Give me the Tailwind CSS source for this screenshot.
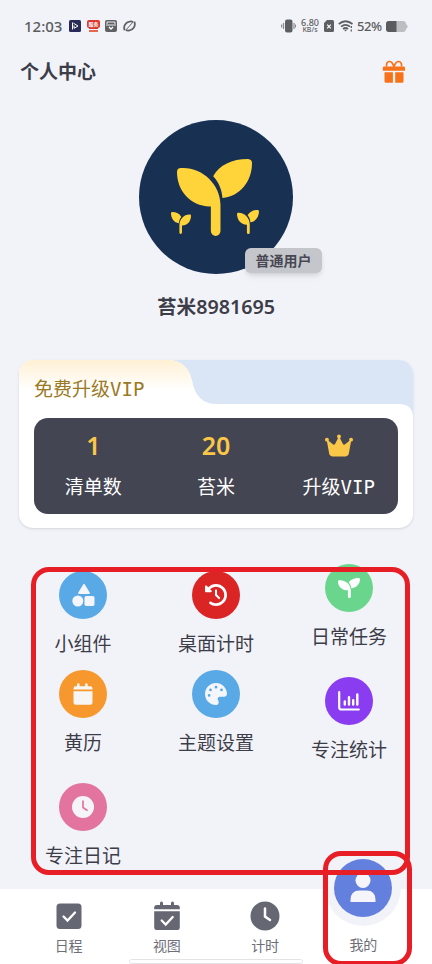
<!DOCTYPE html>
<html lang="zh-CN">
<head>
<meta charset="utf-8">
<title>个人中心</title>
<script src="https://cdn.jsdelivr.net/npm/@tailwindcss/browser@4"></script>
</head>
<body class="bg-[#f2f3f8]">
<svg class="hidden">
  <symbol id="sprout" viewBox="0 0 226 229" preserveAspectRatio="none"><path d="M12 27C75 23 131 75 131 137V214.500a14.500 14.500 0 0 1-29 0V141C42 143 0 95 0 39Q0 27 12 27z"/><path d="M109 51C128 18 165 0 214 0Q226 1 226 13C226 66 190 112 137 116C135 90 126 69 109 51z"/></symbol>
</svg>
<main class="relative flex h-[964px] w-[432px] flex-col overflow-hidden bg-[#f2f3f8] font-['Noto_Sans','Noto_Sans_CJK_SC',sans-serif] text-[#3d3d49]">

  <!-- status bar -->
  <div class="flex h-[50px] items-center pt-[2px] pl-6 text-[#5b5c60]">
    <span class="w-[45px] pt-px text-[15px] font-medium">12:03</span>
    <svg class="h-3 w-3" viewBox="0 0 12 12"><rect width="12" height="12" rx="1.500" fill="#282b57"/><path d="M3.500 2.500v7M4.500 3.200L9 6L5 8.300V5.500" fill="none" stroke="#fff"/></svg>
    <span class="ml-[6px] flex h-3 w-[13px] flex-col items-center"><span class="h-[8px] w-[13px] rounded-[2px] bg-[#dc392f] text-center text-[5px] leading-[8px] font-bold text-white">服务</span><span class="h-px w-[9px] bg-[#dc392f]"></span><span class="mt-px h-[2px] w-[9px] bg-[#e4694f]"></span></span>
    <svg class="ml-[5px] h-3 w-3" viewBox="0 0 12 12"><rect width="12" height="12" rx="2" fill="#606164"/><path d="M2 4V2h8v2M1 5h10" fill="none" stroke="#fff" stroke-width=".9"/><path d="M4 7l2 2 2-2" fill="none" stroke="#fff" stroke-width="1.300"/></svg>
    <svg class="ml-[6px] h-3 w-[13px]" viewBox="0 0 13 12" fill="none" stroke="#606164"><path d="M1.600 10.200C0 6 3 2.200 6.500 1.600c1.500-.3 2.600-.2 3.300.3" stroke-width="1.800"/><path d="M11.400 1.800C13 6 10 9.800 6.500 10.400c-1.500.3-2.600.2-3.300-.3" stroke-width="1.800"/><path d="M1.600 10.200C3 11 9.500 3 9.800 1.900M3.200 10.100C3.500 9 10 1 11.400 1.800" stroke-width=".6"/></svg>
    <svg class="ml-[145px] h-[14px] w-[15px]" viewBox="0 0 15 14"><rect x="4" y=".5" width="7.500" height="13" rx="2" fill="#5e5f62"/><path d="M2.500 4v6M13 4v6M.6 5.500v3M14.600 5.500v3" stroke="#8b8c90" stroke-width="1.200"/></svg>
    <span class="ml-[4px] flex w-5 flex-col items-center text-[9px] leading-[9px] font-medium"><span class="h-[8px]">6.80</span><span class="h-[8px] text-[7px] leading-[8px] font-medium">KB/s</span></span>
    <svg class="ml-[4px] h-3 w-[10px]" viewBox="0 0 10 12"><path d="M3 0h5.500A1.500 1.500 0 0 1 10 1.500v9A1.500 1.500 0 0 1 8.500 12h-7A1.500 1.500 0 0 1 0 10.500V3z" fill="#5e5f62"/><path d="M3.200 4.700l3.600 3.600M6.800 4.700L3.200 8.300" stroke="#fff" stroke-width="1.200"/></svg>
    <svg class="ml-[4px] h-3 w-[16px]" viewBox="0 0 16 12" fill="none" stroke="#5e5f62" stroke-width="1.700"><path d="M.8 4Q7.500-1.500 14.500 4M3 6.700q4.500-3.600 9 0M5 9q2.500-2 5 0"/><path d="M6 9.700h3L7.500 11.500z" fill="#5e5f62" stroke="none"/><path d="M13.300 6v2M13.300 9.500v2" stroke-width="1.300"/></svg>
    <span class="ml-[3px] w-[28px] pt-[2px] text-[13px] tracking-[-0.400px] font-medium">52%</span>
    <svg class="ml-[1px] h-[11px] w-[22px]" viewBox="0 0 22 11"><path d="M3 0h14q3 0 3 3l1.500 1.500v2L20 8q0 3-3 3H3q-3 0-3-3V3q0-3 3-3z" fill="#bdbec1"/><path d="M3 0h7.500v11H3q-3 0-3-3V3q0-3 3-3z" fill="#5a5b5e"/></svg>
  </div>

  <!-- title bar -->
  <header class="flex h-[44px] items-center justify-between pr-[26px] pl-[20px]">
    <h1 class="text-[19px] leading-7 font-semibold">个人中心</h1>
    <svg class="h-6 w-6" viewBox="0 0 24 24" fill="#f77218"><path d="M2.300 6.500h19.400q1.300 0 1.300 1.300v3H.8v-3q0-1.300 1.500-1.300z"/><path d="M2.500 12.300h8.400v10.500H4q-1.500 0-1.500-1.500zM13.200 12.300h8.300v9q0 1.500-1.500 1.500h-6.800z"/><path d="M11.900 6.800C11 3.500 9.500 1.500 7.300 1.500S4 4.200 4.700 6.500M12 6.800c1-3.300 2.600-5.300 4.700-5.300s3.400 2.700 2.700 5" fill="none" stroke="#f77218" stroke-width="1.700"/></svg>
  </header>

  <!-- profile -->
  <section class="flex h-[266px] flex-col items-center pt-[26px]">
    <div class="relative h-[154px] w-[154px] rounded-full bg-[#183153] text-[#ffd43b]">
      <svg class="absolute top-[39px] left-[38px] h-[77px] w-[75px]" fill="currentColor"><use href="#sprout"/></svg>
      <svg class="absolute top-[92px] left-[32px] h-[22px] w-[20px] -scale-x-100" fill="currentColor"><use href="#sprout"/></svg>
      <svg class="absolute top-[90px] left-[98px] h-[24px] w-[22px]" fill="currentColor"><use href="#sprout"/></svg>
      <span class="absolute top-[128px] left-[106px] flex h-[25px] w-[77px] items-center justify-center rounded-[6px] bg-[#c5c6cb] pb-px text-[14px] font-semibold text-[#484854] shadow-md">普通用户</span>
    </div>
    <p class="mt-[19px] text-[19.700px] leading-[28px] font-semibold">苔米8981695</p>
  </section>

  <!-- membership card -->
  <section class="relative mx-[19px] flex h-[168px] flex-col rounded-[14px] bg-white shadow-sm">
    <svg class="absolute top-0 left-0 h-[60px] w-[394px]" viewBox="0 0 394 60">
      <defs><linearGradient id="cream" x1="0" y1="0" x2="0" y2="1"><stop offset="0" stop-color="#fff0d4"/><stop offset="1" stop-color="#fff"/></linearGradient></defs>
      <path d="M120 0H380A14 14 0 0 1 394 14V58Q394 44 380 44H120z" fill="#dae5f6"/>
      <path d="M14 0H149C163 0 170 8 173 21C176 36 184 44 197 44H0V14A14 14 0 0 1 14 0z" fill="#fff"/>
      <path d="M14 0H149C163 0 170 8 173 21L175 30H0V14A14 14 0 0 1 14 0z" fill="url(#cream)"/>
    </svg>
    <h2 class="relative h-[58px] pt-[15px] pl-[15px] text-[19px] leading-[28px] text-[#9b7925]">免费升级<span class="font-['DejaVu_Sans_Mono',monospace] text-[19px]">VIP</span></h2>
    <div class="relative mx-[15px] h-[96px] rounded-[14px] bg-[#444552] text-center text-[19px] text-white">
      <div class="-mx-[2px] grid grid-cols-3">
        <div><p class="pt-[10px] text-[25px] leading-[34px] font-semibold text-[#fac748]">1</p><p class="mt-[11px] leading-[28px]">清单数</p></div>
        <div><p class="pt-[10px] text-[25px] leading-[34px] font-semibold text-[#fac748]">20</p><p class="mt-[11px] leading-[28px]">苔米</p></div>
        <div><div class="flex h-[44px] justify-center pt-[15px]"><svg class="h-[25px] w-[28px]" viewBox="0 0 576 512" fill="#fac748"><path d="M309 106c11.400-7 19-19.700 19-34c0-22.100-17.900-40-40-40s-40 17.900-40 40c0 14.400 7.600 27 19 34L209.700 220.600c-9.100 18.200-32.700 23.400-48.600 10.700L72 160c5-6.700 8-15 8-24c0-22.100-17.900-40-40-40S0 113.900 0 136s17.900 40 40 40h.7L86.400 427.400c5.500 30.400 32 52.600 63 52.600H426.600c30.900 0 57.400-22.100 63-52.600L535.300 176h.7c22.100 0 40-17.900 40-40s-17.900-40-40-40s-40 17.900-40 40c0 9 3 17.300 8 24l-89.100 71.300c-15.900 12.700-39.500 7.500-48.600-10.700L309 106z"/></svg></div><p class="mt-[11px] leading-[28px]">升级<span class="font-['DejaVu_Sans_Mono',monospace] text-[19px]">VIP</span></p></div>
      </div>
    </div>
  </section>

  <!-- feature shortcuts -->
  <section class="grid h-[361px] grid-cols-3 px-[16.500px] text-center text-[19px] leading-[28px]">
    <div class="flex flex-col items-center pt-[43px]">
      <div class="flex h-[86px] flex-col items-center gap-[11px]"><span class="flex size-12 shrink-0 items-center justify-center rounded-full bg-[#59a9e6]"><svg class="size-6" viewBox="0 0 24 24" fill="#f4f6fb"><path d="M12.200 1.500q.8-1.300 1.600 0l4.900 8q.7 1.400-.8 1.400H8.100q-1.500 0-.8-1.400z"/><circle cx="6.800" cy="18" r="5.500"/><rect x="13.500" y="13" width="10" height="10" rx="1.800"/></svg></span><span>小组件</span></div>
      <div class="mt-[13px] flex h-[86px] flex-col items-center gap-[11px]"><span class="flex size-12 shrink-0 items-center justify-center rounded-full bg-[#f6982d]"><svg class="size-6" viewBox="0 0 24 24" fill="#f8f6f5"><path d="M4.500 4.200H6V2.500q0-1.200 1.300-1.200t1.300 1.200v1.700h5.500V2.500q0-1.200 1.300-1.200t1.300 1.200v1.700h2.500q2.300 0 2.300 2.300v1H2.500v-1q0-2.300 2-2.300zM2.500 9.200h19V20.500q0 2.300-2.300 2.300H4.800q-2.300 0-2.300-2.300z"/></svg></span><span>黄历</span></div>
      <div class="mt-[27px] flex h-[86px] flex-col items-center gap-[11px]"><span class="flex size-12 shrink-0 items-center justify-center rounded-full bg-[#e2749f]"><svg class="size-[22px]" viewBox="0 0 22 22"><circle cx="11" cy="11" r="11" fill="#f5f4f9"/><path d="M11 5v6.500l4 2.700" fill="none" stroke="#e2749f" stroke-width="1.700" stroke-linecap="round"/></svg></span><span>专注日记</span></div>
    </div>
    <div class="flex flex-col items-center pt-[43px]">
      <div class="flex h-[86px] flex-col items-center gap-[11px]"><span class="flex size-12 shrink-0 items-center justify-center rounded-full bg-[#db2424]"><svg class="size-[22px]" viewBox="0 0 512 512" fill="#fff"><path d="M75 75L41 41C25.900 25.900 0 36.600 0 57.900V168c0 13.300 10.700 24 24 24H134.100c21.400 0 32.100-25.900 17-41l-30.800-30.800C155 85.500 203 64 256 64c106 0 192 86 192 192s-86 192-192 192c-40.800 0-78.600-12.700-109.700-34.400c-14.500-10.100-34.400-6.600-44.600 7.900s-6.600 34.400 7.900 44.600C151.200 495 201.700 512 256 512c141.400 0 256-114.600 256-256S397.400 0 256 0C185.300 0 121.300 28.700 75 75zm181 53c-13.300 0-24 10.700-24 24V256c0 6.400 2.500 12.500 7 17l72 72c9.400 9.400 24.600 9.400 33.900 0s9.400-24.600 0-33.900l-65-65V152c0-13.300-10.700-24-24-24z"/></svg></span><span>桌面计时</span></div>
      <div class="mt-[13px] flex h-[86px] flex-col items-center gap-[11px]"><span class="flex size-12 shrink-0 items-center justify-center rounded-full bg-[#59a9e6]"><svg class="size-[22px]" viewBox="0 0 512 512" fill="#f4f6fb"><path d="M512 258.700c-.4 36.500-33.600 61.300-70.100 61.300H344c-26.500 0-48 21.500-48 48c0 3.400.4 6.700 1 9.900c2.100 10.200 6.500 20 10.800 29.900c6.100 13.800 12.100 27.500 12.100 42c0 31.800-21.600 60.700-53.400 62c-3.500.1-7 .2-10.600.2C114.600 512 0 397.400 0 256S114.600 0 256 0S512 114.600 512 258.700zM128 288a32 32 0 1 0 -64 0 32 32 0 1 0 64 0zm0-96a32 32 0 1 0 0-64 32 32 0 1 0 0 64zM288 96a32 32 0 1 0 -64 0 32 32 0 1 0 64 0zm96 96a32 32 0 1 0 0-64 32 32 0 1 0 0 64z"/></svg></span><span>主题设置</span></div>
    </div>
    <div class="flex flex-col items-center pt-[36px]">
      <div class="flex h-[86px] flex-col items-center gap-[11px]"><span class="flex size-12 shrink-0 items-center justify-center rounded-full bg-[#6ad58d]"><svg class="h-[20px] w-[22px]" fill="#fff"><use href="#sprout"/></svg></span><span>日常任务</span></div>
      <div class="mt-[27px] flex h-[86px] flex-col items-center gap-[11px]"><span class="flex size-12 shrink-0 items-center justify-center rounded-full bg-[#8a3cf0]"><svg class="h-5 w-[22px]" viewBox="0 0 22 20" fill="none" stroke="#fff" stroke-linecap="round"><path d="M1.200 1.200v15q0 2.300 2.300 2.300h17.300" stroke-width="2.200"/><path d="M6.800 10.500v3M11 6.300v7.200M15.200 9.300v4.200M19.300 3.500v10" stroke-width="2.400"/></svg></span><span>专注统计</span></div>
    </div>
  </section>

  <!-- tab bar -->
  <nav class="relative grid h-[75px] grid-cols-4 bg-white px-[19.500px] text-center text-[14px] leading-[20px] text-[#6d6e77]">
    <div class="flex flex-col items-center pt-[12px]"><svg class="h-[30px] w-[30px]" viewBox="0 0 30 30"><rect x="2.500" y="2.500" width="25" height="25.500" rx="3.500" fill="#656873"/><path d="M9.500 15.500l4 4 7.500-8" fill="none" stroke="#fff" stroke-width="2.300" stroke-linecap="round"/></svg><span class="mt-[5px]">日程</span></div>
    <div class="flex flex-col items-center pt-[12px]"><svg class="h-[30px] w-[30px]" viewBox="0 0 30 30"><path d="M5 4h3V2q0-1.500 1.500-1.500T11 2v2h8V2q0-1.500 1.500-1.500T22 2v2h3q2.800 0 2.800 2.800v1.400H2.200V6.800Q2.200 4 5 4zM2.200 10.300h25.600v15.900q0 2.800-2.800 2.800H5q-2.800 0-2.800-2.800z" fill="#656873"/><path d="M9.700 19.500l4 4 7-7.500" fill="none" stroke="#fff" stroke-width="2.300" stroke-linecap="round"/></svg><span class="mt-[5px]">视图</span></div>
    <div class="flex flex-col items-center pt-[12px]"><svg class="h-[30px] w-[30px]" viewBox="0 0 30 30"><circle cx="15" cy="15" r="14.500" fill="#656873"/><path d="M15 7.500v8l5 3.500" fill="none" stroke="#fff" stroke-width="2.500" stroke-linecap="round"/></svg><span class="mt-[5px]">计时</span></div>
    <div class="relative flex flex-col items-center pt-[46px]"><span class="absolute -top-[39px] flex h-[76px] w-[76px] items-center justify-center rounded-full bg-[#f2f3f8]"><span class="flex size-[58px] items-center justify-center rounded-full bg-[#6380de]"><svg class="h-[32px] w-[26px]" viewBox="0 0 26 32" fill="#f5f5fb"><circle cx="13" cy="8.500" r="7.500"/><path d="M.5 30v-2Q.5 18.500 9.500 18.500h7q9 0 9 9.500v2z"/></svg></span></span><span>我的</span></div>
    <span class="absolute top-[70px] left-[129px] h-[5px] w-[174px] rounded-full border border-[#e3e3e5] bg-white"></span>
  </nav>

  <!-- highlight frames -->
  <div class="absolute top-[567px] left-[31px] h-[308px] w-[379px] rounded-[18px] border-5 border-[#e81e27]"></div>
  <div class="absolute top-[851px] left-[323px] h-[115px] w-[89px] rounded-[18px] border-5 border-[#e81e27]"></div>
</main>
</body>
</html>
